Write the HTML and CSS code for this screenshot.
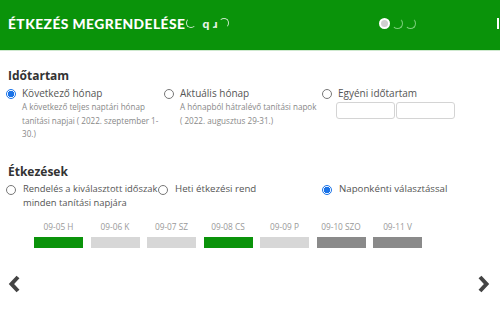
FILE: index.html
```html
<!DOCTYPE html>
<html>
  <head>
    <title>Étkezés megrendelése</title>
    <link rel="stylesheet" href="styles.css">
  </head>
  <body>
    <div class="header">
      <h1 class="title">ÉTKEZÉS MEGRENDELÉSE<span class="glitch"><i class="arc"></i>q ɹ<i class="arc"></i></span></h1>
      <div class="steps">
        <span class="step active"></span>
        <span class="step"></span>
        <span class="step"></span>
      </div>
      <span class="close"></span>
    </div>

    <div class="content">
      <h2>Időtartam</h2>
      <div class="options">
        <div class="option">
          <span class="radio checked"></span>
          <div>
            <div class="label">Következő hónap</div>
            <div class="desc">A következő teljes naptári hónap tanítási napjai ( 2022. szeptember 1-30.)</div>
          </div>
        </div>
        <div class="option">
          <span class="radio"></span>
          <div>
            <div class="label">Aktuális hónap</div>
            <div class="desc">A hónapból hátralévő tanítási napok<br>( 2022. augusztus 29-31.)</div>
          </div>
        </div>
        <div class="option">
          <span class="radio"></span>
          <div>
            <div class="label">Egyéni időtartam</div>
            <div class="range">
              <input type="text">
              <input type="text">
            </div>
          </div>
        </div>
      </div>

      <h2 class="second">Étkezések</h2>
      <div class="options meals">
        <div class="option">
          <span class="radio"></span>
          <div class="label nowrap">Rendelés a kiválasztott időszak<br>minden tanítási napjára</div>
        </div>
        <div class="option">
          <span class="radio"></span>
          <div class="label">Heti étkezési rend</div>
        </div>
        <div class="option">
          <span class="radio checked"></span>
          <div class="label">Naponkénti választással</div>
        </div>
      </div>

      <div class="days">
        <div class="day"><span>09-05 H</span><div class="bar green"></div></div>
        <div class="day"><span>09-06 K</span><div class="bar light"></div></div>
        <div class="day"><span>09-07 SZ</span><div class="bar light"></div></div>
        <div class="day"><span>09-08 CS</span><div class="bar green"></div></div>
        <div class="day"><span>09-09 P</span><div class="bar light"></div></div>
        <div class="day"><span>09-10 SZO</span><div class="bar dark"></div></div>
        <div class="day"><span>09-11 V</span><div class="bar dark"></div></div>
      </div>

      <div class="nav">
        <svg width="13" height="18" viewBox="0 0 13 18"><path d="M10 2 L3.5 9 L10 16" fill="none" stroke="#444" stroke-width="4"/></svg>
        <svg width="13" height="18" viewBox="0 0 13 18"><path d="M3 2 L9.5 9 L3 16" fill="none" stroke="#444" stroke-width="4"/></svg>
      </div>
    </div>
  </body>
</html>
```

FILE: styles.css
```css
body {
  margin: 0;
  font-family: "Open Sans", sans-serif;
  color: #444;
  background-color: #fff;
}

.header {
  height: 50px;
  background-color: #0a930a;
  border-bottom: 1px solid #cfe9cf;
  display: flex;
  align-items: center;
  position: relative;
  overflow: hidden;
}

.title {
  margin: 0 0 4px 8px;
  font-family: Lato, sans-serif;
  font-weight: 900;
  font-size: 13.8px;
  letter-spacing: 0.45px;
  color: #fff;
  display: flex;
  align-items: center;
}

.glitch {
  display: flex;
  align-items: center;
  gap: 6px;
  font-size: 12px;
  margin-left: 1px;
  color: #e8f5e8;
}

.arc {
  width: 8px;
  height: 8px;
  border-radius: 50%;
  border: 1px solid transparent;
  border-bottom-color: #cde9cd;
  border-left-color: #cde9cd;
}

.glitch .arc:last-child {
  margin-left: -5px;
  border-color: #cde9cd #cde9cd transparent transparent;
}

.steps {
  display: flex;
  gap: 2px;
  margin-left: 150px;
  margin-bottom: 3px;
}

.step {
  width: 9px;
  height: 9px;
  border-radius: 50%;
  border: 1px solid transparent;
  border-right-color: #7ccf7c;
  border-bottom-color: #7ccf7c;
}

.step.active {
  background-color: #cfcfcf;
  border: 2px solid #fff;
  width: 7px;
  height: 7px;
}

.close {
  position: absolute;
  right: 1px;
  top: 18px;
  width: 2px;
  height: 11px;
  background-color: #fff;
}

.content {
  padding: 0 0 0 6px;
}

h2 {
  margin: 16px 0 2px 2px;
  font-size: 12px;
  font-weight: 700;
  color: #333;
}

h2.second {
  margin-top: 22px;
}

.options {
  display: grid;
  grid-template-columns: 158px 158px 1fr;
}

.meals {
  grid-template-columns: 152px 164px 1fr;
}

.option {
  display: flex;
  align-items: flex-start;
}

.radio {
  flex: none;
  width: 8px;
  height: 8px;
  margin: 3px 6px 0 0;
  border: 1px solid #777;
  border-radius: 50%;
}

.radio.checked {
  border-color: #1a73e8;
  background: radial-gradient(circle, #1a73e8 0 3px, #fff 3.5px);
}

.label {
  font-size: 10px;
  line-height: 14px;
  color: #555;
}

.meals .label {
  font-size: 9.7px;
  margin-left: 1px;
}

.meals .nowrap {
  font-size: 9.4px;
}

.nowrap {
  white-space: nowrap;
}

.desc {
  font-size: 8.1px;
  line-height: 13.5px;
  color: #888;
  padding-right: 2px;
}

.range {
  display: flex;
  margin: 2px 0 0 -2px;
}

.range input {
  width: 55px;
  height: 13px;
  padding: 1px;
  margin: 0 1px 0 0;
  border: 1px solid #d4d4d4;
  border-radius: 3px;
}

.days {
  display: flex;
  gap: 7.5px;
  margin: 11px 0 0 28px;
}

.day {
  width: 49px;
  display: flex;
  flex-direction: column;
  align-items: center;
  gap: 5px;
}

.day span {
  font-size: 8.3px;
  color: #999;
}

.bar {
  width: 49px;
  height: 11px;
}

.green {
  background-color: #0a930a;
}

.light {
  background-color: #d7d7d7;
}

.dark {
  background-color: #8a8a8a;
}

.nav {
  display: flex;
  justify-content: space-between;
  margin: 27px 10px 0 2px;
}
```
